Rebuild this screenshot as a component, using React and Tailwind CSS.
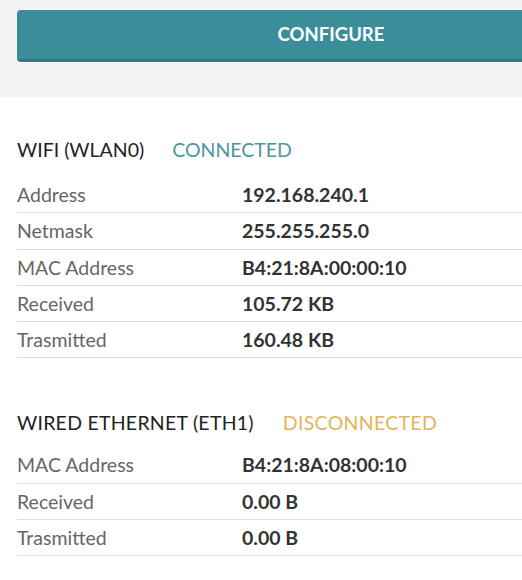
import React from "react";

const wifi = [
  ["Address", "192.168.240.1"],
  ["Netmask", "255.255.255.0"],
  ["MAC Address", "B4:21:8A:00:00:10"],
  ["Received", "105.72 KB"],
  ["Trasmitted", "160.48 KB"],
];
const eth = [
  ["MAC Address", "B4:21:8A:08:00:10"],
  ["Received", "0.00 B"],
  ["Trasmitted", "0.00 B"],
];

function Rows({ rows }) {
  return (
    <div className="flex flex-col">
      {rows.map(([k, v]) => (
        <div key={k} className="flex h-[36.25px] items-center border-b border-[#dedede]">
          <div className="w-[225px] text-[19.5px] text-[#666666]">{k}</div>
          <div className="text-[19.5px] font-bold text-[#333333]">{v}</div>
        </div>
      ))}
    </div>
  );
}

export default function App() {
  return (
    <div
      className="w-[522px] h-[580px] overflow-hidden bg-white"
      style={{ fontFamily: "Lato, 'Open Sans', sans-serif" }}
    >
      <div className="w-[700px] h-[97px] bg-[#f4f4f4] pt-[10px] pl-[17px]">
        <button className="w-[628px] h-[52px] rounded-[4px] bg-[#3a8d99] border-b-[3px] border-[#347b84] text-white font-bold text-[18.5px] flex items-center justify-center">
          CONFIGURE
        </button>
      </div>
      <div className="w-[700px] pl-[17px] pt-[41px]">
        <div className="flex items-center h-[24px] mb-[15px] text-[19.5px]">
          <span className="text-[#222222]">WIFI (WLAN0)</span>
          <span className="ml-[28px] text-[#4a97a2]">CONNECTED</span>
        </div>
        <Rows rows={wifi} />
        <div className="flex items-center h-[24px] mt-[52px] mb-[13px] text-[19.5px]">
          <span className="text-[#222222] tracking-[0.25px]">WIRED ETHERNET (ETH1)</span>
          <span className="ml-[29px] text-[#e6b458] tracking-[0.3px]">DISCONNECTED</span>
        </div>
        <Rows rows={eth} />
      </div>
    </div>
  );
}
